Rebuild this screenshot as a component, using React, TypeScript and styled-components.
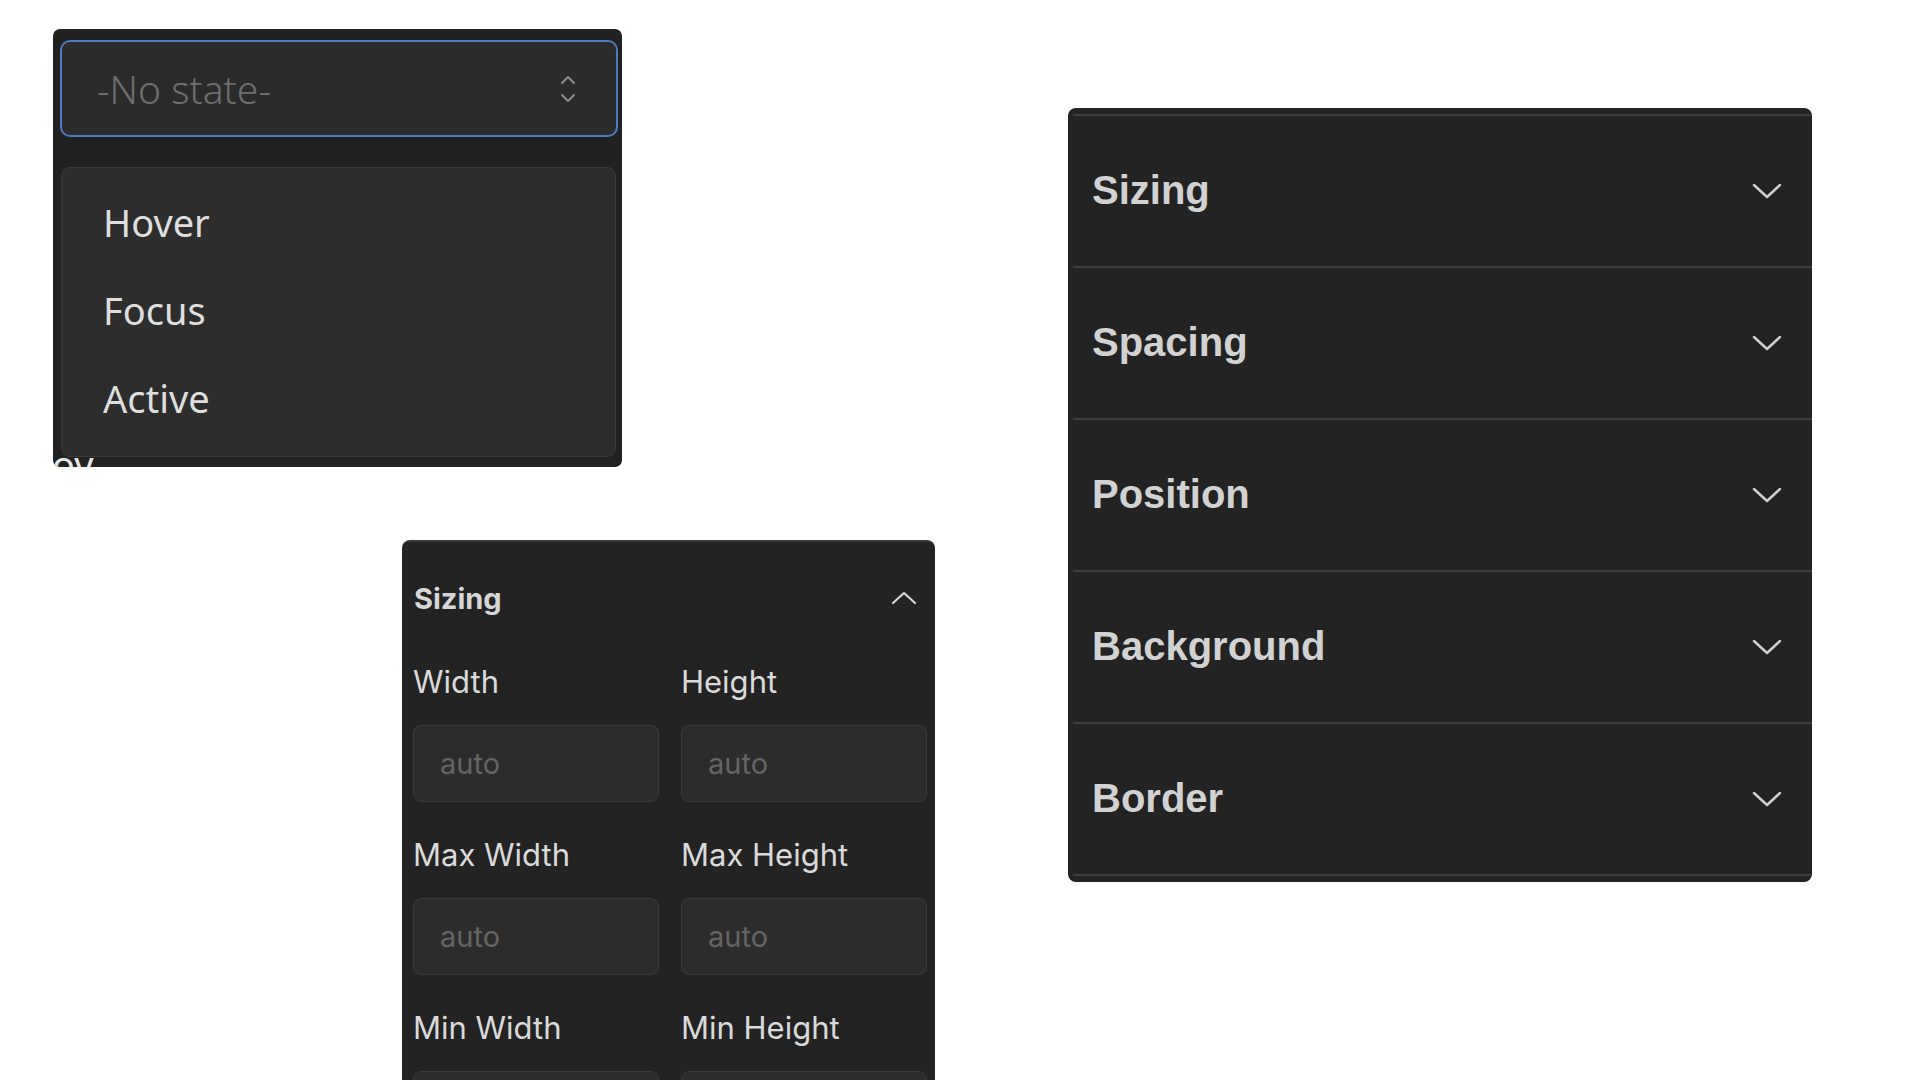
import styled, { createGlobalStyle } from 'styled-components';

const GlobalStyle = createGlobalStyle`
    html, body {
        margin: 0;
        padding: 0;
        background: #ffffff;
    }
    * {
        box-sizing: border-box;
    }
`;

const Page = styled.div`
    display: flex;
    align-items: flex-start;
    width: 1920px;
    height: 1080px;
    padding: 29px 0 0 53px;
    overflow: hidden;
`;

const LeftColumn = styled.div`
    display: flex;
    flex-direction: column;
    width: 882px;
`;

/* ---------- state picker ---------- */

const StatePanel = styled.div`
    width: 569px;
    height: 438px;
    padding: 11px 4px 0 7px;
    background: #212121;
    border-radius: 7px;
    overflow: hidden;
    font-family: 'Noto Sans', 'Open Sans', sans-serif;
`;

const Select = styled.div`
    display: flex;
    align-items: center;
    justify-content: space-between;
    height: 97px;
    padding: 0 40px 0 35px;
    background: #2b2b2b;
    border: 2px solid #4d78c4;
    border-radius: 10px;
    color: #6e6e6e;
    font-size: 39px;
    font-weight: 300;
`;

const OptionList = styled.ul`
    list-style: none;
    margin: 30px 2px 0 1px;
    padding: 10px 0 14px;
    background: #2d2d2d;
    border: 1px solid #3b3b3b;
    border-radius: 9px;
`;

const Option = styled.li`
    display: flex;
    align-items: center;
    height: 88px;
    padding-left: 41px;
    color: #dedede;
    font-size: 38px;
`;

const PeekText = styled.div`
    margin: -12px 0 0 -8px;
    color: #e6e6e6;
    font-size: 38px;
    line-height: 38px;
    height: 38px;
`;

/* ---------- expanded sizing section ---------- */

const SizingPanel = styled.div`
    width: 533px;
    height: 540px;
    margin: 73px 0 0 349px;
    padding: 26px 8px 0 11px;
    background: #232323;
    border-top: 2px solid #383838;
    border-radius: 8px 8px 0 0;
    font-family: Inter, 'Noto Sans', sans-serif;
`;

const SectionHeader = styled.div`
    display: flex;
    align-items: center;
    justify-content: space-between;
    height: 60px;
    padding: 0 10px 0 1px;
`;

const SmallTitle = styled.h3`
    margin: 0;
    color: #d6d6d6;
    font-size: 29px;
    font-weight: 700;
`;

const FieldGrid = styled.div`
    display: grid;
    grid-template-columns: 1fr 1fr;
    column-gap: 22px;
    row-gap: 33px;
    margin-top: 34px;
`;

const Field = styled.label`
    display: flex;
    flex-direction: column;
    gap: 23px;
`;

const FieldLabel = styled.span`
    height: 40px;
    line-height: 40px;
    color: #dadada;
    font-size: 31px;
`;

const Input = styled.input`
    height: 77px;
    width: 100%;
    padding: 0 0 0 26px;
    background: #2c2c2c;
    border: 1px solid #3a3a3a;
    border-radius: 8px;
    color: #dadada;
    font-family: Inter, 'Noto Sans', sans-serif;
    font-size: 29px;
    outline: none;
    &::placeholder {
        color: #646464;
    }
`;

/* ---------- collapsed style sections ---------- */

const StylePanel = styled.div`
    width: 744px;
    height: 774px;
    margin: 79px 0 0 133px;
    padding: 6px 0;
    background: #232323;
    border-radius: 8px;
    font-family: 'Liberation Sans', Arial, sans-serif;
`;

const SectionList = styled.div`
    margin-left: 5px;
    border-bottom: 2px solid #3d3d3d;
`;

const SectionRow = styled.div`
    display: flex;
    align-items: center;
    justify-content: space-between;
    height: 152px;
    padding: 0 29px 0 19px;
    border-top: 2px solid #3d3d3d;
`;

const BigTitle = styled.h2`
    margin: 0 0 2px;
    color: #d2d2d2;
    font-size: 40px;
    font-weight: 700;
`;

const ChevronDown = () => (
    <svg width="32" height="16" viewBox="0 0 32 16" fill="none">
        <polyline points="3,2 16,14 29,2" stroke="#d0d0d0" strokeWidth="2.4" strokeLinecap="round" strokeLinejoin="round" />
    </svg>
);

const ChevronUp = () => (
    <svg width="26" height="14" viewBox="0 0 26 14" fill="none">
        <polyline points="2,12 13,2 24,12" stroke="#d6d6d6" strokeWidth="2.2" strokeLinecap="round" strokeLinejoin="round" />
    </svg>
);

const UpDown = () => (
    <svg width="16" height="28" viewBox="0 0 16 28" fill="none">
        <polyline points="2,8 8,2 14,8" stroke="#8a8a8a" strokeWidth="2" strokeLinecap="round" strokeLinejoin="round" />
        <polyline points="2,20 8,26 14,20" stroke="#8a8a8a" strokeWidth="2" strokeLinecap="round" strokeLinejoin="round" />
    </svg>
);

const fields = ['Width', 'Height', 'Max Width', 'Max Height', 'Min Width', 'Min Height'];
const sections = ['Sizing', 'Spacing', 'Position', 'Background', 'Border'];

const App = () => {
    return (
        <>
            <GlobalStyle />
            <Page>
                <LeftColumn>
                    <StatePanel>
                        <Select>
                            <span>-No state-</span>
                            <UpDown />
                        </Select>
                        <OptionList>
                            <Option>Hover</Option>
                            <Option>Focus</Option>
                            <Option>Active</Option>
                        </OptionList>
                        <PeekText>ov</PeekText>
                    </StatePanel>
                    <SizingPanel>
                        <SectionHeader>
                            <SmallTitle>Sizing</SmallTitle>
                            <ChevronUp />
                        </SectionHeader>
                        <FieldGrid>
                            {fields.map((f) => (
                                <Field key={f}>
                                    <FieldLabel>{f}</FieldLabel>
                                    <Input placeholder="auto" />
                                </Field>
                            ))}
                        </FieldGrid>
                    </SizingPanel>
                </LeftColumn>
                <StylePanel>
                    <SectionList>
                        {sections.map((s) => (
                            <SectionRow key={s}>
                                <BigTitle>{s}</BigTitle>
                                <ChevronDown />
                            </SectionRow>
                        ))}
                    </SectionList>
                </StylePanel>
            </Page>
        </>
    );
};
export default App;
